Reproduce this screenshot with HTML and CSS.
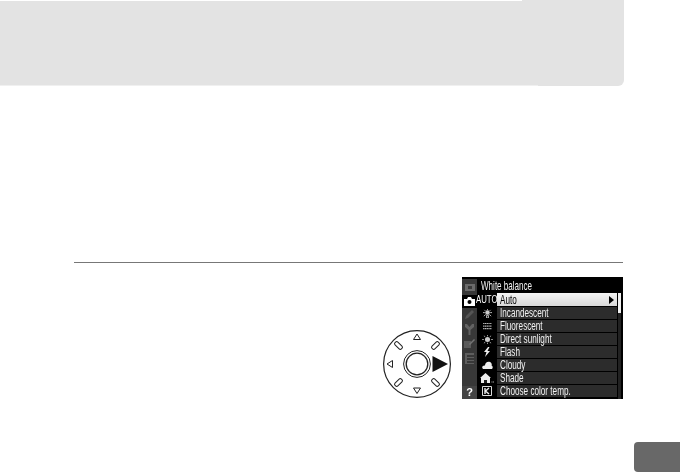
FILE: index.html
```html
<!DOCTYPE html>
<html lang="en">
  <head>
    <meta charset="UTF-8" />
    <title>White balance</title>
    <link rel="stylesheet" href="styles.css">
  </head>
  <body>
    <div class="banner"></div>
    <hr class="rule" />

    <div class="figures">
      <svg class="dial" width="70" height="70" viewBox="0 0 70 70">
        <g fill="#fff" stroke="#222" stroke-width="1">
          <circle cx="35" cy="35" r="33.4" stroke-width="1.2" />
          <circle cx="35" cy="35" r="13.4" />
          <circle cx="35" cy="35" r="10.8" stroke-width="1.3" />
          <path d="M35 5 l3.500 5.500 h-7 z" />
          <path d="M35 64.500 l3.500 -5.500 h-7 z" />
          <path d="M5 35 l5.500 -3.500 v7 z" />
          <rect x="-2" y="-4.5" width="4" height="9" rx="1.6" transform="translate(16.500 16.500) rotate(-45)" />
          <rect x="-2" y="-4.5" width="4" height="9" rx="1.6" transform="translate(53.500 16.500) rotate(45)" />
          <rect x="-2" y="-4.5" width="4" height="9" rx="1.6" transform="translate(16.500 53.500) rotate(45)" />
          <rect x="-2" y="-4.5" width="4" height="9" rx="1.6" transform="translate(53.500 53.500) rotate(-45)" />
        </g>
        <path d="M50.5 27 L66 35 L50.5 43 z" fill="#111" />
      </svg>

      <div class="screen">
        <div class="sidebar">
          <div class="tab">
            <svg width="10" height="8" viewBox="0 0 10 8"><path d="M0 1h10v7H0z" fill="#6a6a6a" /><path d="M3 3h4v3H3z" fill="#3a3a3a" /></svg>
          </div>
          <div class="tab tab-active">
            <svg width="11" height="9" viewBox="0 0 11 9"><path d="M0 2h3l1-2h3l1 2h3v7H0z" fill="#fff" /><circle cx="5.5" cy="5" r="2" fill="#000" /></svg>
          </div>
          <div class="tab">
            <svg width="11" height="11" viewBox="0 0 11 11"><path d="M1 10 L2 7 L8 1 L10 3 L4 9 z" fill="#555" /></svg>
          </div>
          <div class="tab">
            <svg width="9" height="11" viewBox="0 0 9 11"><path d="M0 0 L2 0 L4.500 3 L7 0 L9 0 L9 3 L5.500 6 V11 H3.500 V6 L0 3 z" fill="#626262" /></svg>
          </div>
          <div class="tab">
            <svg width="11" height="9" viewBox="0 0 11 9"><path d="M0 2h7v7H0z" fill="#5a5a5a" /><path d="M5 5 L10 0 L11 1 L6 6 z" fill="#747474" /></svg>
          </div>
          <div class="tab">
            <svg width="9" height="11" viewBox="0 0 9 11"><path d="M0 0h9v2H0zM0 4h9v1H0zM0 7h9v1H0zM0 10h9v1H0z" fill="#5e5e5e" /><path d="M0 0h2v11H0z" fill="#5e5e5e" /></svg>
          </div>
          <div class="tab-help">?</div>
        </div>

        <div class="content">
          <div class="title"><span class="narrow">White balance</span></div>
          <div class="menu">
            <div class="row row-active">
              <span class="icon icon-auto"><span class="narrow-auto">AUTO</span></span>
              <span class="label"><span class="narrow">Auto</span></span>
              <span class="more"></span>
            </div>
            <div class="row">
              <span class="icon"><svg width="11" height="9" viewBox="0 0 12 10"><circle cx="6" cy="4" r="2.500" fill="#ccc" /><path d="M6 0v1M1 4h2M9 4h2M2.500 1l1 1M9.500 1l-1 1M2 8l2-2M10 8L8 6M5 7h2v3H5z" stroke="#ccc" fill="none" /></svg></span>
              <span class="label"><span class="narrow">Incandescent</span></span>
            </div>
            <div class="row">
              <span class="icon"><svg width="11" height="7" viewBox="0 0 12 8"><path d="M1 .5h10M1 3.500h10M1 6.500h10" stroke="#bbb" stroke-width="1.400" stroke-dasharray="1.500 .5" /></svg></span>
              <span class="label"><span class="narrow">Fluorescent</span></span>
            </div>
            <div class="row">
              <span class="icon"><svg width="11" height="9" viewBox="0 0 12 10"><circle cx="6" cy="5" r="2.800" fill="#ccc" /><path d="M6 0v1.500M6 8.500V10M0 5h2M10 5h2M2 1l1.500 1M10 1L8.500 2M2 9l1.500-1M10 9L8.500 8" stroke="#aaa" fill="none" /></svg></span>
              <span class="label"><span class="narrow">Direct sunlight</span></span>
            </div>
            <div class="row">
              <span class="icon"><svg width="8" height="10" viewBox="0 0 8 10"><path d="M5 0 L1 5 H3.500 L2 10 L7 4 H4.500 L6.500 0 z" fill="#eee" /></svg></span>
              <span class="label"><span class="narrow">Flash</span></span>
            </div>
            <div class="row">
              <span class="icon"><svg width="11" height="8" viewBox="0 0 11 8"><path d="M1 8 C-1 6 1 4 3 4.500 C3 2 5.500 0 8 1 C10 2 10 4 9.500 4.500 C11 5 11 7 10 8 z" fill="#eee" /></svg></span>
              <span class="label"><span class="narrow">Cloudy</span></span>
            </div>
            <div class="row">
              <span class="icon"><svg width="14" height="10" viewBox="0 0 14 10"><path d="M5.500 0 L11 5 H10 V10 H1 V5 H0 z" fill="#eee" /><path d="M4 7h3v3H4z" fill="#222" /><path d="M11.500 9h1M13 9h1" stroke="#aaa" /></svg></span>
              <span class="label"><span class="narrow">Shade</span></span>
            </div>
            <div class="row">
              <span class="icon"><svg width="10" height="10" viewBox="0 0 10 10"><path d="M.5 .5h9v9h-9z" fill="none" stroke="#ddd" /><path d="M3 2v6M7 2 L3.500 5 L7 8" stroke="#eee" stroke-width="1.400" fill="none" /></svg></span>
              <span class="label"><span class="narrow">Choose color temp.</span></span>
            </div>
          </div>
        </div>

        <div class="scrollbar"><div class="thumb"></div></div>
      </div>
    </div>

    <div class="page-tab"></div>
  </body>
</html>
```

FILE: styles.css
```css
html, body {
  height: 472px;
  overflow: hidden;
}
body {
  display: flex;
  flex-direction: column;
  margin: 0;
  background-color: #fff;
  font-family: "Liberation Sans", Arial, sans-serif;
}
.banner {
  width: 624px;
  height: 86px;
  background:
    linear-gradient(#fff, #fff) no-repeat 0 0 / 522px 1px,
    linear-gradient(#f0f0f0, #f0f0f0) no-repeat 0 100% / 538px 1px,
    #e3e3e3;
  border-bottom-right-radius: 6px;
}
.rule {
  align-self: stretch;
  height: 1px;
  margin: 176px 57px 0 74px;
  border: none;
  background-color: #777;
}
.figures {
  display: flex;
  justify-content: flex-end;
  align-items: flex-start;
  margin: 14px 57px 0 0;
}
.dial {
  margin: 52px 10px 0 0;
  flex: none;
}

/* camera screen */
.screen {
  display: flex;
  width: 161px;
  height: 122px;
  background-color: #000;
  filter: blur(0.4px);
}
.sidebar {
  display: flex;
  flex-direction: column;
  align-items: center;
  width: 15px;
  margin-top: 2px;
  padding-top: 1px;
  background-color: #383838;
}
.tab {
  display: flex;
  justify-content: center;
  align-items: center;
  width: 100%;
  height: 14.5px;
}
.tab-active {
  height: 13px;
  background-color: #000;
}
.tab-help {
  width: 100%;
  margin-top: auto;
  height: 13px;
  line-height: 13px;
  background-color: #444;
  color: #fff;
  font-size: 11px;
  font-weight: bold;
  text-align: center;
}
.content {
  flex: 1;
  min-width: 0;
}
.narrow {
  display: inline-block;
  transform: scaleX(0.68);
  transform-origin: left center;
  white-space: nowrap;
}
.title {
  height: 16px;
  padding: 1px 0 0 4px;
  box-sizing: border-box;
  line-height: 15px;
  color: #f2f2f2;
  font-size: 13px;
}
.title .narrow {
  transform: scaleX(0.62);
}
.menu {
  display: flex;
  flex-direction: column;
  gap: 1px;
}
.row {
  display: flex;
  align-items: center;
  height: 12px;
  color: #f2f2f2;
  background-color: #2c2c2c;
  font-size: 12px;
}
.icon {
  display: flex;
  justify-content: center;
  align-items: center;
  width: 20px;
  height: 100%;
  flex: none;
  background-color: #000;
}
.label {
  flex: 1;
  padding-left: 3px;
  line-height: 12px;
}
.row-active {
  height: 13px;
  color: #000;
  background: linear-gradient(#f4f4f4, #d8d8d8);
}
.icon-auto {
  color: #fff;
  font-size: 10px;
}
.narrow-auto {
  display: inline-block;
  transform: scaleX(0.78);
  white-space: nowrap;
}
.more {
  width: 0;
  height: 0;
  margin-right: 3px;
  border-left: 5px solid #000;
  border-top: 4px solid transparent;
  border-bottom: 4px solid transparent;
}
.scrollbar {
  width: 3px;
  margin: 16px 2px 0 1px;
  background-color: #222;
}
.thumb {
  height: 20px;
  background-color: #f0f0f0;
}

.page-tab {
  align-self: flex-end;
  margin-top: auto;
  width: 46px;
  height: 30px;
  background-color: #686868;
  border-radius: 4px 0 0 4px;
}
```
